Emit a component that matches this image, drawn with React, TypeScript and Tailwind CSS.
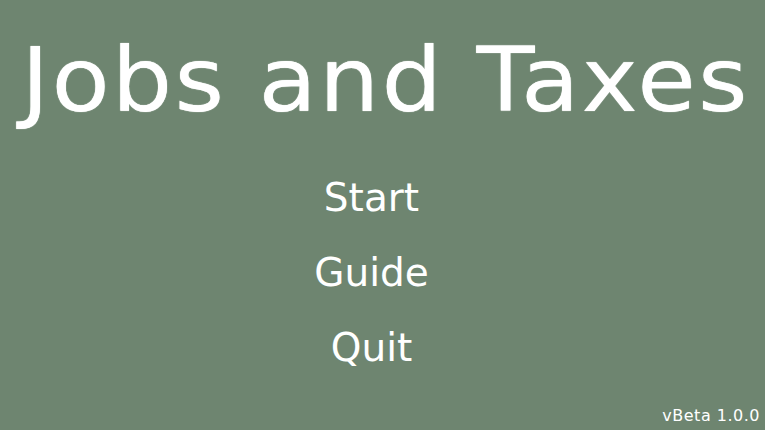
export default function App() {
  const items = ["Start", "Guide", "Quit"];
  return (
    <div className="relative flex h-[430px] w-[765px] flex-col items-center overflow-hidden bg-[#6e8570] font-['DejaVu_Sans',sans-serif] text-white">
      <h1 className="ml-[5px] mt-[36px] scale-x-[1.07] whitespace-nowrap text-[89px] leading-none tracking-[2px] [text-shadow:0_0_1px_white]">
        Jobs and Taxes
      </h1>
      <div className="mr-[22px] mt-[53px] flex flex-col items-center gap-[36px]">
        {items.map((item) => (
          <button key={item} className="text-[39px] leading-[39px]">
            {item}
          </button>
        ))}
      </div>
      <span className="absolute bottom-[6px] right-[5px] text-[16px] leading-none tracking-[0.5px]">vBeta 1.0.0</span>
    </div>
  );
}
